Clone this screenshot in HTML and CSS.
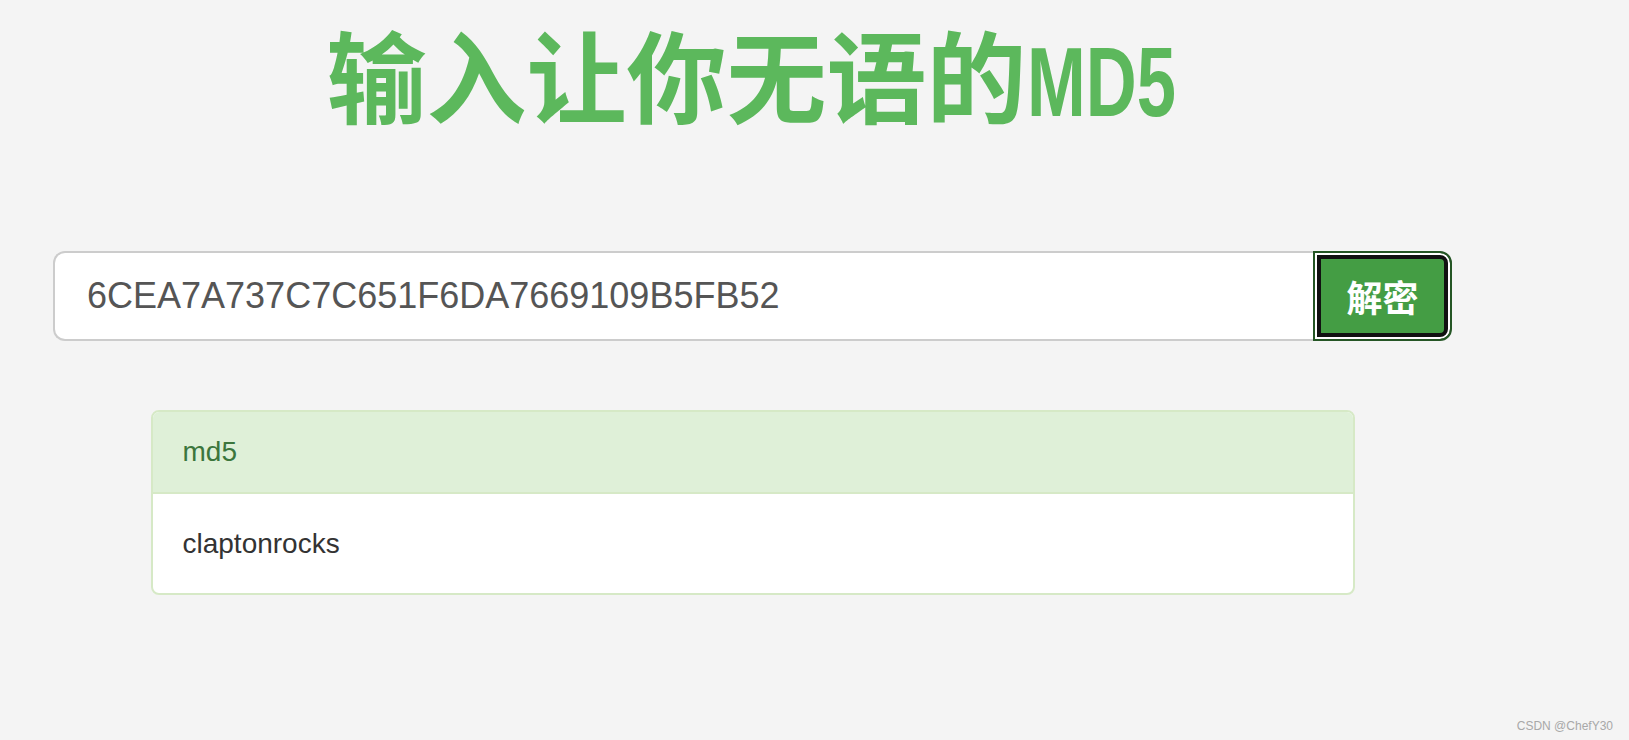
FILE: index.html
```html
<!DOCTYPE html>
<html lang="zh-CN">
<head>
<meta charset="utf-8">
<title>MD5</title>
<link rel="stylesheet" href="styles.css">
</head>
<body>
<div class="page">
  <h1 class="title">输入让你无语的<span class="latin">MD5</span></h1>
  <div class="input-group">
    <input class="hash-input" type="text" value="6CEA7A737C7C651F6DA7669109B5FB52">
    <button class="btn-decode" type="button">解密</button>
  </div>
  <div class="panel">
    <div class="panel-heading">md5</div>
    <div class="panel-body">claptonrocks</div>
  </div>
</div>
<div class="watermark">CSDN @ChefY30</div>
</body>
</html>
```

FILE: styles.css
```css
html, body {
  margin: 0;
  padding: 0;
}
body {
  background: #f4f4f4;
  font-family: "Liberation Sans", Arial, "Noto Sans CJK SC", sans-serif;
  width: 1629px;
  height: 740px;
  overflow: hidden;
  position: relative;
}
.page {
  width: 1505px;
  padding-top: 13px;
}
.title {
  margin: 0;
  text-align: center;
  font-family: "Noto Sans CJK SC", sans-serif;
  font-weight: 700;
  font-size: 100px;
  line-height: 120px;
  color: #5cb85c;
  white-space: nowrap;
}
.latin {
  display: inline-block;
  width: 152px;
  font-family: "Liberation Sans", Arial, sans-serif;
  font-size: 98px;
  font-weight: 700;
  text-align: left;
  transform-origin: left center;
  transform: scaleX(0.72);
}
.input-group {
  display: flex;
  width: 1399px;
  height: 90px;
  margin: 109px auto 0;
}
.hash-input {
  flex: 1;
  min-width: 0;
  box-sizing: border-box;
  height: 90px;
  margin: 0;
  padding: 0 32px;
  border: 2px solid #cccccc;
  border-right: none;
  border-radius: 12px 0 0 12px;
  background: #fff;
  font-family: "Liberation Sans", Arial, sans-serif;
  font-size: 36px;
  color: #555555;
  outline: none;
}
.btn-decode {
  width: 139px;
  height: 90px;
  box-sizing: border-box;
  margin: 0;
  padding: 0;
  border: 2px solid #255625;
  border-radius: 0 12px 12px 0;
  background: #449d44;
  box-shadow: inset 0 0 0 2px #ffffff, inset 0 0 0 6px #111111;
  color: #ffffff;
  font-family: "Noto Sans CJK SC", sans-serif;
  font-weight: 700;
  font-size: 36px;
  line-height: 1;
}
.panel {
  width: 1204px;
  margin: 69px auto 0;
  border: 2px solid #d6e9c6;
  border-radius: 8px;
  background: #fff;
  box-sizing: border-box;
  overflow: hidden;
}
.panel-heading {
  background: #dff0d8;
  color: #3c763d;
  border-bottom: 2px solid #d6e9c6;
  padding: 20px 30px;
  font-size: 28px;
  line-height: 40px;
}
.panel-body {
  padding: 30px 30px 29px;
  color: #333333;
  font-size: 28px;
  line-height: 40px;
}
.watermark {
  position: absolute;
  right: 16px;
  bottom: 7px;
  font-family: "Liberation Sans", Arial, sans-serif;
  font-size: 12px;
  color: #a8a8a8;
}
```
